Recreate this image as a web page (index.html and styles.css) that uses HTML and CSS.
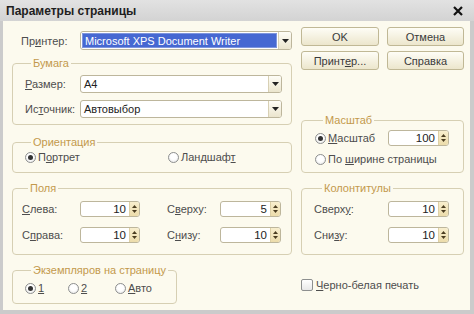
FILE: index.html
```html
<!DOCTYPE html>
<html lang="ru">
<head>
<meta charset="utf-8">
<title>Параметры страницы</title>
<link rel="stylesheet" href="styles.css">
</head>
<body>
<div class="win">
  <div class="titlebar">
    <span class="title">Параметры страницы</span>
    <svg class="close" width="10" height="10" viewBox="0 0 10 10"><path d="M1 1L9 9M9 1L1 9" stroke="#111" stroke-width="2.2"/></svg>
  </div>
  <div class="client">
    <div class="col-left">
      <div class="printer-row">
        <span class="lbl lbl-printer">Пр<u>и</u>нтер:</span>
        <div class="combo combo-printer">
          <span class="ct sel">Microsoft XPS Document Writer</span>
          <span class="dd"><svg width="7" height="4" viewBox="0 0 7 4"><path d="M0 0H7L3.5 4Z" fill="#222"/></svg></span>
        </div>
      </div>

      <div class="group paper">
        <div class="legend">Бумага</div>
        <div class="row r1">
          <span class="lbl lbl-paper"><u>Р</u>азмер:</span>
          <div class="combo combo-paper">
            <span class="ct">A4</span>
            <span class="dd"><svg width="7" height="4" viewBox="0 0 7 4"><path d="M0 0H7L3.5 4Z" fill="#222"/></svg></span>
          </div>
        </div>
        <div class="row r2">
          <span class="lbl lbl-paper">Ис<u>т</u>очник:</span>
          <div class="combo combo-paper">
            <span class="ct">Автовыбор</span>
            <span class="dd"><svg width="7" height="4" viewBox="0 0 7 4"><path d="M0 0H7L3.5 4Z" fill="#222"/></svg></span>
          </div>
        </div>
      </div>

      <div class="group orient">
        <div class="legend">Ориентация</div>
        <div class="row radios">
          <label class="opt opt-portrait"><span class="radio on"></span><span>П<u>о</u>ртрет</span></label>
          <label class="opt"><span class="radio"></span><span>Ландшаф<u>т</u></span></label>
        </div>
      </div>

      <div class="group margins">
        <div class="legend">Поля</div>
        <div class="fgrid fgrid-left">
          <span class="lbl"><u>С</u>лева:</span>
          <div class="spin"><span class="v">10</span><span class="sb"><svg width="5" height="3" viewBox="0 0 5 3"><path d="M0 3H5L2.5 0Z" fill="#4a3c20"/></svg><svg width="5" height="3" viewBox="0 0 5 3"><path d="M0 0H5L2.5 3Z" fill="#4a3c20"/></svg></span></div>
          <span class="lbl c4">С<u>в</u>ерху:</span>
          <div class="spin"><span class="v">5</span><span class="sb"><svg width="5" height="3" viewBox="0 0 5 3"><path d="M0 3H5L2.5 0Z" fill="#4a3c20"/></svg><svg width="5" height="3" viewBox="0 0 5 3"><path d="M0 0H5L2.5 3Z" fill="#4a3c20"/></svg></span></div>
          <span class="lbl">С<u>п</u>рава:</span>
          <div class="spin"><span class="v">10</span><span class="sb"><svg width="5" height="3" viewBox="0 0 5 3"><path d="M0 3H5L2.5 0Z" fill="#4a3c20"/></svg><svg width="5" height="3" viewBox="0 0 5 3"><path d="M0 0H5L2.5 3Z" fill="#4a3c20"/></svg></span></div>
          <span class="lbl c4">С<u>н</u>изу:</span>
          <div class="spin"><span class="v">10</span><span class="sb"><svg width="5" height="3" viewBox="0 0 5 3"><path d="M0 3H5L2.5 0Z" fill="#4a3c20"/></svg><svg width="5" height="3" viewBox="0 0 5 3"><path d="M0 0H5L2.5 3Z" fill="#4a3c20"/></svg></span></div>
        </div>
      </div>

      <div class="group copies">
        <div class="legend">Экземпляров на страницу</div>
        <div class="row radios">
          <label class="opt opt-1"><span class="radio on"></span><span><u>1</u></span></label>
          <label class="opt opt-2"><span class="radio"></span><span><u>2</u></span></label>
          <label class="opt"><span class="radio"></span><span><u>А</u>вто</span></label>
        </div>
      </div>
    </div>

    <div class="col-right">
      <div class="buttons">
        <div class="btn">OK</div>
        <div class="btn">Отмена</div>
        <div class="btn"><span>Принт<u>е</u>р...</span></div>
        <div class="btn">Справка</div>
      </div>

      <div class="group scale rgroup">
        <div class="legend">Масштаб</div>
        <div class="row s1">
          <label class="opt opt-scale"><span class="radio on"></span><span><u>М</u>асштаб</span></label>
          <div class="spin spin-r"><span class="v">100</span><span class="sb"><svg width="5" height="3" viewBox="0 0 5 3"><path d="M0 3H5L2.5 0Z" fill="#4a3c20"/></svg><svg width="5" height="3" viewBox="0 0 5 3"><path d="M0 0H5L2.5 3Z" fill="#4a3c20"/></svg></span></div>
        </div>
        <div class="row s2">
          <label class="opt"><span class="radio"></span><span>По <u>ш</u>ирине страницы</span></label>
        </div>
      </div>

      <div class="group headers rgroup">
        <div class="legend">Колонтитулы</div>
        <div class="fgrid fgrid-right">
          <span class="lbl">Сверх<u>у</u>:</span>
          <div class="spin"><span class="v">10</span><span class="sb"><svg width="5" height="3" viewBox="0 0 5 3"><path d="M0 3H5L2.5 0Z" fill="#4a3c20"/></svg><svg width="5" height="3" viewBox="0 0 5 3"><path d="M0 0H5L2.5 3Z" fill="#4a3c20"/></svg></span></div>
          <span class="lbl">Сни<u>з</u>у:</span>
          <div class="spin"><span class="v">10</span><span class="sb"><svg width="5" height="3" viewBox="0 0 5 3"><path d="M0 3H5L2.5 0Z" fill="#4a3c20"/></svg><svg width="5" height="3" viewBox="0 0 5 3"><path d="M0 0H5L2.5 3Z" fill="#4a3c20"/></svg></span></div>
        </div>
      </div>

      <label class="check-row"><span class="check"></span><span><u>Ч</u>ерно-белая печать</span></label>
    </div>
  </div>
</div>
</body>
</html>
```

FILE: styles.css
```css
* { box-sizing: border-box; }
html, body { margin: 0; padding: 0; }
body {
  width: 474px;
  height: 314px;
  overflow: hidden;
  font-family: "Liberation Sans", Arial, sans-serif;
  font-size: 11px;
  color: #454545;
  background: #cdcdcd;
}
u { text-decoration: underline; text-underline-offset: 1px; }

.win {
  width: 474px;
  height: 314px;
  display: flex;
  flex-direction: column;
}

.titlebar {
  height: 21px;
  flex: none;
  display: flex;
  align-items: center;
  justify-content: space-between;
  padding: 0 11px 0 6px;
  background: linear-gradient(#e2e2e2, #d3d3d3);
}
.title {
  font-weight: bold;
  font-size: 12px;
  color: #1e1e1e;
}

.client {
  flex: 1;
  display: flex;
  gap: 9px;
  padding: 6px 6px 0 9px;
  background: #fcfaee;
  border-style: solid;
  border-color: #cbcbcb;
  border-width: 0 4px 4px 3px;
}

.col-left { width: 280px; flex: none; }
.col-right { width: 163px; flex: none; }

.lbl { color: #4d4d4d; white-space: nowrap; }

/* printer row */
.printer-row {
  margin-top: 4px;
  padding-left: 9px;
  display: flex;
  align-items: center;
  height: 19px;
}
.lbl-printer { width: 59px; flex: none; }

/* combo */
.combo {
  display: flex;
  height: 18px;
  border: 1px solid #bdb69c;
  border-radius: 3px;
  background: #fff;
  overflow: hidden;
}
.combo-printer { width: 212px; height: 19px; }
.combo-paper { width: 202px; }
.ct {
  flex: 1;
  padding-left: 3px;
  line-height: 16px;
  color: #222;
  white-space: nowrap;
}
.ct.sel {
  margin: 1px;
  line-height: 15px;
  padding-left: 2px;
  background: #4668d2;
  border: 1px solid #7e95dd;
  color: #fff;
}
.dd {
  width: 13px;
  flex: none;
  border-left: 1px solid #d8d0b4;
  background: linear-gradient(#fefdf7, #ebe5cd);
  display: flex;
  align-items: center;
  justify-content: center;
}

/* groups */
.group {
  border: 1px solid #d6cfb3;
  border-radius: 4px;
}
.legend {
  display: table;
  margin-top: -7px;
  margin-left: 6px;
  padding: 0 2px;
  line-height: 13px;
  background: #fcfaee;
  color: #c3994c;
  white-space: nowrap;
}
.rgroup .legend { margin-left: 8px; }

.row { display: flex; align-items: center; }

.paper {
  margin-top: 13px;
  padding: 0 9px 6px 12px;
}
.paper .r1 { margin-top: 5px; }
.paper .r2 { margin-top: 7px; }
.lbl-paper { width: 55px; flex: none; }

.orient {
  margin-top: 17px;
  padding: 0 9px 8px 12px;
}
.radios { margin-top: 1px; height: 14px; }
.opt {
  display: flex;
  align-items: center;
  color: #4d4d4d;
  white-space: nowrap;
}
.opt-portrait { width: 143px; }

.radio {
  width: 11px;
  height: 11px;
  flex: none;
  border-radius: 50%;
  border: 1px solid #8d8f8f;
  background: radial-gradient(circle at 50% 40%, #ffffff 40%, #e2e2e2 100%);
  margin-right: 2px;
  display: flex;
  align-items: center;
  justify-content: center;
}
.radio.on::after {
  content: "";
  width: 5px;
  height: 5px;
  border-radius: 50%;
  background: #333;
}

.margins {
  margin-top: 15px;
  padding: 0 10px 11px 9px;
}
.fgrid {
  display: grid;
  align-items: center;
  row-gap: 10px;
  margin-top: 6px;
}
.fgrid-left { grid-template-columns: 58px 60px 27px 53px 61px; }
.fgrid-left .c4 { grid-column: 4; }
.fgrid-right { grid-template-columns: 74px 61px; }

.spin {
  display: flex;
  height: 16px;
  border: 1px solid #bdb69c;
  border-radius: 3px;
  background: #fff;
  overflow: hidden;
}
.spin .v {
  flex: 1;
  text-align: right;
  padding-right: 3px;
  line-height: 14px;
  color: #222;
  font-size: 11.5px;
}
.spin .sb {
  width: 10px;
  flex: none;
  border-left: 1px solid #ddd0a6;
  background: linear-gradient(#f8eecd, #ecdcab);
  display: flex;
  flex-direction: column;
  align-items: center;
  justify-content: center;
  gap: 2px;
}
.spin-r { width: 61px; }

.copies {
  margin-top: 15px;
  width: 165px;
  padding: 0 6px 8px 12px;
}
.copies .radios { margin-top: 4px; }
.opt-1 { width: 43px; }
.opt-2 { width: 47px; }

/* right column */
.buttons {
  display: grid;
  grid-template-columns: 78px 77px;
  column-gap: 8px;
  row-gap: 5px;
}
.btn {
  height: 19px;
  border: 1px solid #c0b895;
  border-radius: 3px;
  background: linear-gradient(#fefdf6, #ece6cc);
  display: flex;
  align-items: center;
  justify-content: center;
  color: #3a3a3a;
  white-space: nowrap;
}

.scale {
  margin-top: 50px;
  padding: 0 14px 6px 13px;
}
.scale .s1 { margin-top: 3px; }
.scale .s2 { margin-top: 6px; height: 14px; }
.opt-scale { width: 73px; }

.headers {
  margin-top: 15px;
  padding: 0 14px 11px 12px;
}

.check-row {
  margin-top: 23px;
  display: flex;
  align-items: center;
  height: 13px;
  color: #4d4d4d;
  white-space: nowrap;
}
.check {
  width: 12px;
  height: 12px;
  border: 1px solid #8d8f8f;
  border-radius: 2px;
  background: linear-gradient(#ffffff, #e8e8e8);
  margin-right: 3px;
}
```
